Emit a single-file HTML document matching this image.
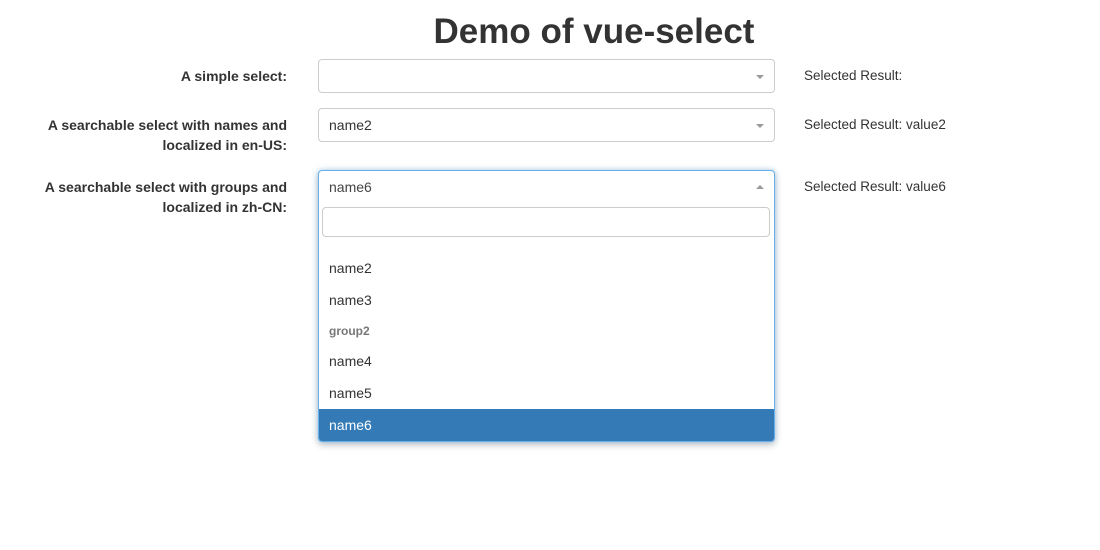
<!DOCTYPE html>
<html><head><style>
body{margin:0;width:1100px;height:550px;background:#fff;font-family:"Liberation Sans",Helvetica,Arial,sans-serif;color:#333;position:relative;overflow:hidden}
.a{position:absolute}
h1{position:absolute;left:0;width:1188px;text-align:center;top:10px;margin:0;font-size:35px;font-weight:bold;line-height:44px}
.lbl{position:absolute;right:813px;text-align:right;font-weight:bold;font-size:14px;line-height:20px}
.sel{position:absolute;left:318px;width:455px;height:32px;border:1px solid #ccc;border-radius:4px;background:#fff;font-size:14px;line-height:32px;box-sizing:content-box}
.sel span{position:absolute;left:10px}
.car{position:absolute;right:10px;top:15px;width:0;height:0;border-left:4px solid transparent;border-right:4px solid transparent;border-top:4px solid #999}
.res{position:absolute;left:804px;font-size:13.5px;line-height:18px}
.it{position:absolute;left:0;right:0;height:32px;line-height:32px;padding-left:10px;font-size:14px}
</style></head><body>
<h1>Demo of vue-select</h1>
<div class="lbl" style="top:66px">A simple select:</div>
<div class="sel" style="top:59px"><div class="car"></div></div>
<div class="res" style="top:67px">Selected Result:</div>

<div class="lbl" style="top:115px">A searchable select with names and<br>localized in en-US:</div>
<div class="sel" style="top:108px"><span>name2</span><div class="car"></div></div>
<div class="res" style="top:116px">Selected Result: value2</div>

<div class="lbl" style="top:177px">A searchable select with groups and<br>localized in zh-CN:</div>
<div class="res" style="top:178px">Selected Result: value6</div>
<div class="a" style="left:318px;top:170px;width:455px;height:270px;border:1px solid #66afe9;border-radius:4px;box-shadow:0 3px 8px rgba(0,0,0,.2),0 0 6px rgba(102,175,233,.5);background:#fff;overflow:hidden">
 <div class="it" style="top:0;color:#444">name6</div>
 <div class="a" style="right:10px;top:14px;width:0;height:0;border-left:4px solid transparent;border-right:4px solid transparent;border-bottom:4px solid #999"></div>
 <div class="a" style="left:3px;top:36px;width:446px;height:28px;border:1px solid #ccc;border-radius:4px"></div>
 <div class="it" style="top:81px">name2</div>
 <div class="it" style="top:113px">name3</div>
 <div class="it" style="top:144px;font-size:12px;font-weight:bold;color:#777">group2</div>
 <div class="it" style="top:174px">name4</div>
 <div class="it" style="top:206px">name5</div>
 <div class="it" style="top:238px;background:#337ab7;color:#fff">name6</div>
</div>
</body></html>
